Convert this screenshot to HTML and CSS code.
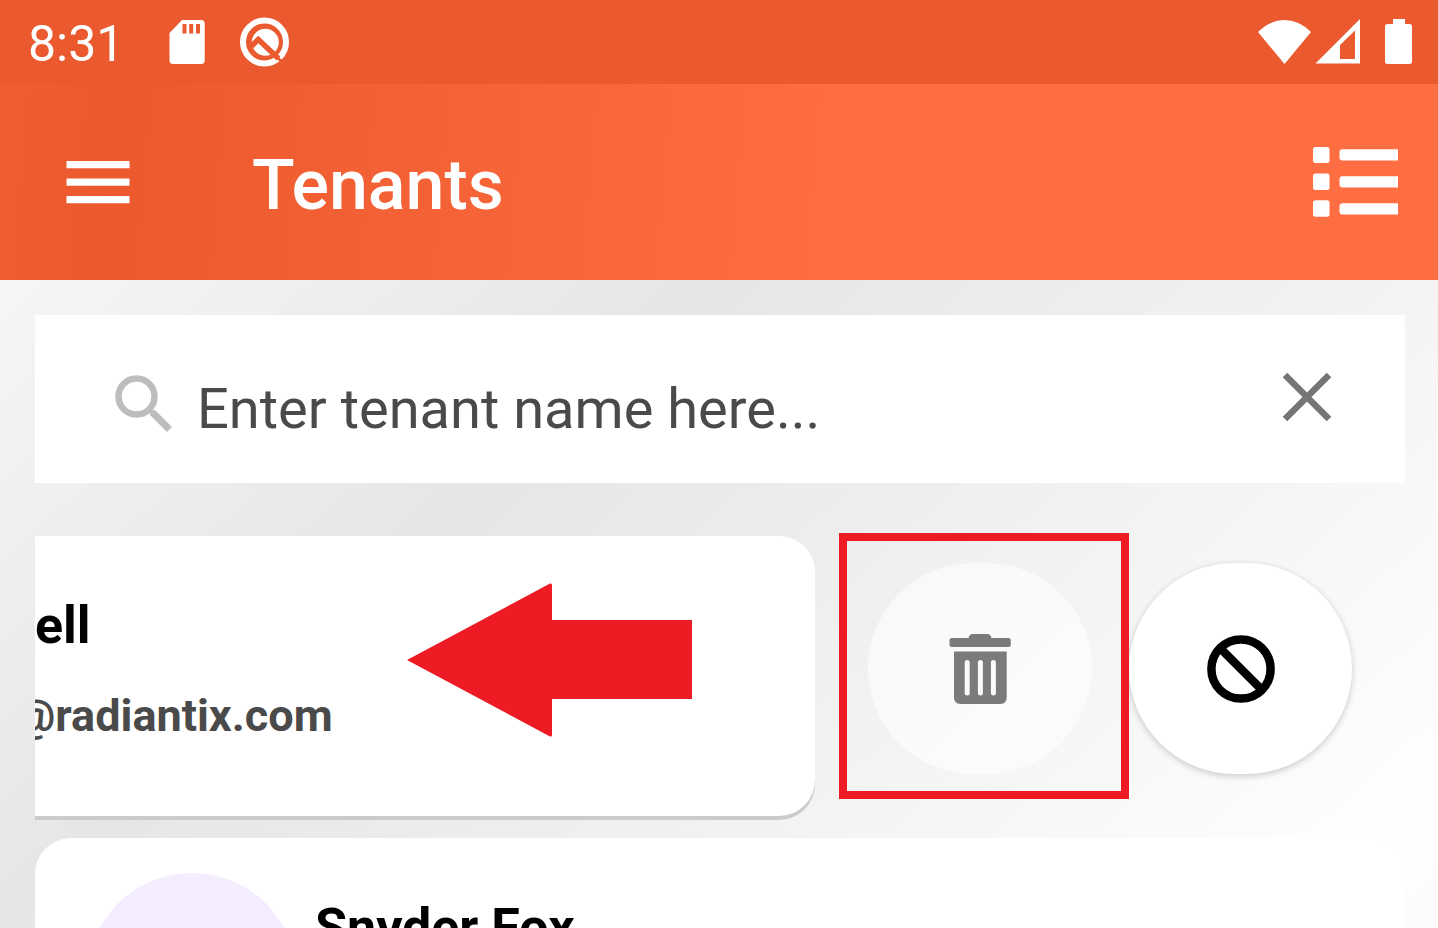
FILE: index.html
```html
<!DOCTYPE html>
<html lang="en">
<head>
<meta charset="utf-8">
<meta name="viewport" content="width=device-width, initial-scale=1">
<title>Tenants</title>
<link rel="stylesheet" href="styles.css">
</head>
<body>
<div class="app">
  <div class="status-bar">
    <span class="clock">8:31</span>
    <svg class="icon-sd" width="36" height="46" viewBox="0 0 36 46" fill="#fff" aria-hidden="true">
      <path fill-rule="evenodd" d="M13 1H32q3.700 0 3.700 3.700V41.500q0 3.500-3.500 3.500H4Q0.500 45 0.500 41.500V14zM13.500 5v9.500h4V5zM20.200 5v9.500h4V5zM27 5v9.500h4V5z"/>
    </svg>
    <svg class="icon-q" width="50" height="50" viewBox="0 0 50 50" aria-hidden="true">
      <circle cx="24.500" cy="25" r="21.500" fill="none" stroke="#fff" stroke-width="6"/>
      <circle cx="25.300" cy="25.300" r="13.500" fill="#fff"/>
      <path d="M9 31.500L18.300 22.500L38.500 41.500" fill="none" stroke="#eb5a2e" stroke-width="5.500"/>
      <path d="M35 38.500L46 48.500" fill="none" stroke="#eb5a2e" stroke-width="3"/>
    </svg>
    <svg class="icon-wifi" width="54" height="46" viewBox="0 0 54 46" fill="#fff" aria-hidden="true">
      <path d="M0 13Q12 1 26.500 1T53 13L26.500 45z"/>
    </svg>
    <svg class="icon-signal" width="46" height="46" viewBox="0 0 46 46" fill="#fff" aria-hidden="true">
      <path fill-rule="evenodd" d="M45 0V44.500H0.500zM25 26V40H40V11.500z"/>
    </svg>
    <svg class="icon-battery" width="28" height="46" viewBox="0 0 28 46" fill="#fff" aria-hidden="true">
      <path d="M8 0H20V5H24.500q2.500 0 2.500 2.500V42.500q0 2.500-2.500 2.500H2.500Q0 45 0 42.500V7.500Q0 5 2.500 5H8z"/>
    </svg>
  </div>

  <header class="toolbar">
    <button class="icon-button" type="button" aria-label="Open menu">
      <svg width="64" height="44" viewBox="0 0 64 44" fill="#fff" aria-hidden="true">
        <path d="M0.500 1H63.500V8.300H0.500zM0.500 18.500H63.500V25.800H0.500zM0.500 36H63.500V43.300H0.500z"/>
      </svg>
    </button>
    <h1 class="title">Tenants</h1>
    <button class="icon-button" type="button" aria-label="List view">
      <svg width="86" height="70" viewBox="0 0 86 70" fill="#fff" aria-hidden="true">
        <rect x="0" y="0" width="16.500" height="16" rx="2.500"/>
        <rect x="0" y="26.500" width="16.500" height="16.500" rx="2.500"/>
        <rect x="0" y="53.300" width="16.500" height="16.500" rx="2.500"/>
        <path d="M29.500 2.300H85V13.500H29.500q-3 0-3-3V5.300q0-3 3-3zM29.500 29.300H85V40.500H29.500q-3 0-3-3V32.300q0-3 3-3zM29.500 56.200H85V67.400H29.500q-3 0-3-3V59.200q0-3 3-3z"/>
      </svg>
    </button>
  </header>

  <main class="content">
    <form class="search" role="search">
      <svg class="search-icon" width="58" height="58" viewBox="0 0 58 58" fill="none" stroke="#bdbdbd" aria-hidden="true">
        <circle cx="21.500" cy="21.500" r="18" stroke-width="6.500"/>
        <path d="M37 37L54.500 54.500" stroke-width="7"/>
        <path d="M33.500 33.500L38 38" stroke-width="4"/>
      </svg>
      <input class="search-input" type="text" aria-label="Tenant name" placeholder="Enter tenant name here...">
      <button class="icon-button search-clear" type="reset" aria-label="Clear">
        <svg width="50" height="50" viewBox="0 0 50 50" fill="none" stroke="#757575" stroke-width="6.500" aria-hidden="true">
          <path d="M3 3L47 47M47 3L3 47"/>
        </svg>
      </button>
    </form>

    <section class="tenants">
      <div class="swipe-row">
        <article class="card card-swiped">
          <div class="info">
            <h2 class="name">ell</h2>
            <p class="email email-cut">@radiantix.com</p>
          </div>
          <svg class="arrow" width="286" height="154" viewBox="0 0 286 154" fill="#ed1c24" aria-hidden="true">
            <path d="M0 77L143 0.500Q145 0 145 2V37H285V116H145V152Q145 154 143 153.500z"/>
          </svg>
        </article>
        <div class="actions">
          <div class="highlighted">
            <button class="action action-disabled" type="button" aria-label="Delete" disabled>
              <svg width="62" height="72" viewBox="0 0 62 72" fill="#7b7b7b" aria-hidden="true">
                <path d="M19.500 5Q20.500 1 23.500 1H38.500Q41.500 1 42.500 5H59.500q2.300 0 2.300 2.300V11.700q0 2.300-2.300 2.300H2.800Q0.500 14 0.500 11.700V7.300Q0.500 5 2.800 5z"/>
                <path fill-rule="evenodd" d="M5 18.500H57.700V64.500q0 6.500-6.500 6.500H11.500q-6.500 0-6.500-6.500zM15.700 29.500V60a2.500 2.500 0 0 0 5 0V29.500a2.500 2.500 0 0 0-5 0zM28.900 29.500V60a2.500 2.500 0 0 0 5 0V29.500a2.500 2.500 0 0 0-5 0zM41.900 29.500V60a2.500 2.500 0 0 0 5 0V29.500a2.500 2.500 0 0 0-5 0z"/>
              </svg>
            </button>
          </div>
          <button class="action" type="button" aria-label="Block">
            <svg width="68" height="68" viewBox="0 0 68 68" fill="none" stroke="#000" stroke-width="8.500" aria-hidden="true">
              <circle cx="34" cy="34" r="29.600"/>
              <path d="M13 13L55 55"/>
            </svg>
          </button>
        </div>
      </div>

      <article class="card card-full">
        <div class="avatar"></div>
        <div class="info">
          <h2 class="name">Snyder Fox</h2>
        </div>
      </article>
    </section>
  </main>
</div>
</body>
</html>
```
FILE: styles.css
```css
* {
  box-sizing: border-box;
}

body {
  margin: 0;
  font-family: Roboto, "Liberation Sans", sans-serif;
  color: #000;
}

h1, h2, p {
  margin: 0;
}

svg {
  display: block;
  flex: none;
}

button {
  font: inherit;
  border: 0;
  padding: 0;
  background: none;
  cursor: pointer;
}

.app {
  display: flex;
  flex-direction: column;
  height: 100vh;
  overflow: hidden;
}

.status-bar {
  flex: none;
  display: flex;
  align-items: center;
  height: 84px;
  padding: 0 25px 0 28px;
  background: #eb5a2e;
  color: #fff;
}

.clock {
  padding-top: 4px;
  font-size: 50px;
  line-height: 60px;
}

.icon-sd {
  margin-left: 45px;
}

.icon-q {
  margin-left: 35px;
}

.icon-wifi {
  margin-left: auto;
}

.icon-signal {
  margin-left: 3px;
}

.icon-battery {
  margin-left: 24px;
}

.toolbar {
  flex: none;
  display: flex;
  align-items: center;
  height: 196px;
  padding: 0 39px 0 66px;
  background: linear-gradient(95deg, #ef5e32 0%, #eb592d 8%, #ff6e42 59%, #ff6e42 100%);
  color: #fff;
}

.icon-button {
  flex: none;
}

.title {
  flex: 1;
  margin-left: 122px;
  padding-top: 6px;
  font-size: 70px;
  font-weight: 500;
  line-height: 80px;
}

.content {
  flex: 1;
  min-height: 0;
  overflow: hidden;
  padding: 35px 33px 0 35px;
  background: linear-gradient(138deg, #f6f6f6 0%, #e6e6e6 33%, #fff 94%, #fbfbfb 100%);
}

.search {
  display: flex;
  align-items: center;
  height: 168px;
  padding: 0 73px 0 80px;
  background: #fff;
}

.search-icon {
  margin-top: 10px;
}

.search-input {
  flex: 1;
  min-width: 0;
  height: 80px;
  margin: 20px 24px 0;
  padding: 0;
  border: 0;
  outline: 0;
  background: none;
  font: inherit;
  font-size: 56px;
  color: #4a4a4a;
}

.search-input::placeholder {
  color: #4a4a4a;
  opacity: 1;
}

.search-clear {
  margin-bottom: 4px;
}

.tenants {
  display: flex;
  flex-direction: column;
  gap: 22px;
  margin-top: 53px;
}

.swipe-row {
  display: flex;
}

.card {
  display: flex;
  min-height: 280px;
  background: #fff;
}

.card-swiped {
  flex: 1;
  position: relative;
  border-radius: 0 36px 36px 0;
  box-shadow: 0 4px 0 #cbcbcb;
}

.card-full {
  padding: 0 52px;
  gap: 18px;
  border-radius: 36px;
}

.info {
  display: flex;
  flex-direction: column;
  gap: 30px;
  padding-top: 60px;
}

.card-swiped .info {
  overflow: hidden;
}

.name {
  font-size: 52px;
  font-weight: 700;
  line-height: 60px;
}

.email {
  font-size: 45px;
  font-weight: 700;
  line-height: 60px;
  color: #4a4a4a;
}

.email-cut {
  margin-left: -20px;
}

.arrow {
  position: absolute;
  top: 47px;
  right: 122px;
}

.actions {
  flex: none;
  display: flex;
  align-items: flex-start;
  gap: 37px;
  padding: 27px 53px 0 53px;
}

.action {
  display: flex;
  align-items: center;
  justify-content: center;
  width: 223px;
  height: 211px;
  border-radius: 106px;
  background: #fff;
  box-shadow: 0 2px 7px rgba(0, 0, 0, 0.2);
}

.action-disabled {
  width: 224px;
  background: rgba(255, 255, 255, 0.6);
  box-shadow: none;
}

.highlighted {
  position: relative;
}

.highlighted::after {
  content: "";
  position: absolute;
  inset: -30px -37px -25px -29px;
  border: 8px solid #ed1c24;
  pointer-events: none;
}

.avatar {
  flex: none;
  width: 210px;
  height: 210px;
  margin-top: 35px;
  border-radius: 50%;
  background: #f4edff;
}
```
